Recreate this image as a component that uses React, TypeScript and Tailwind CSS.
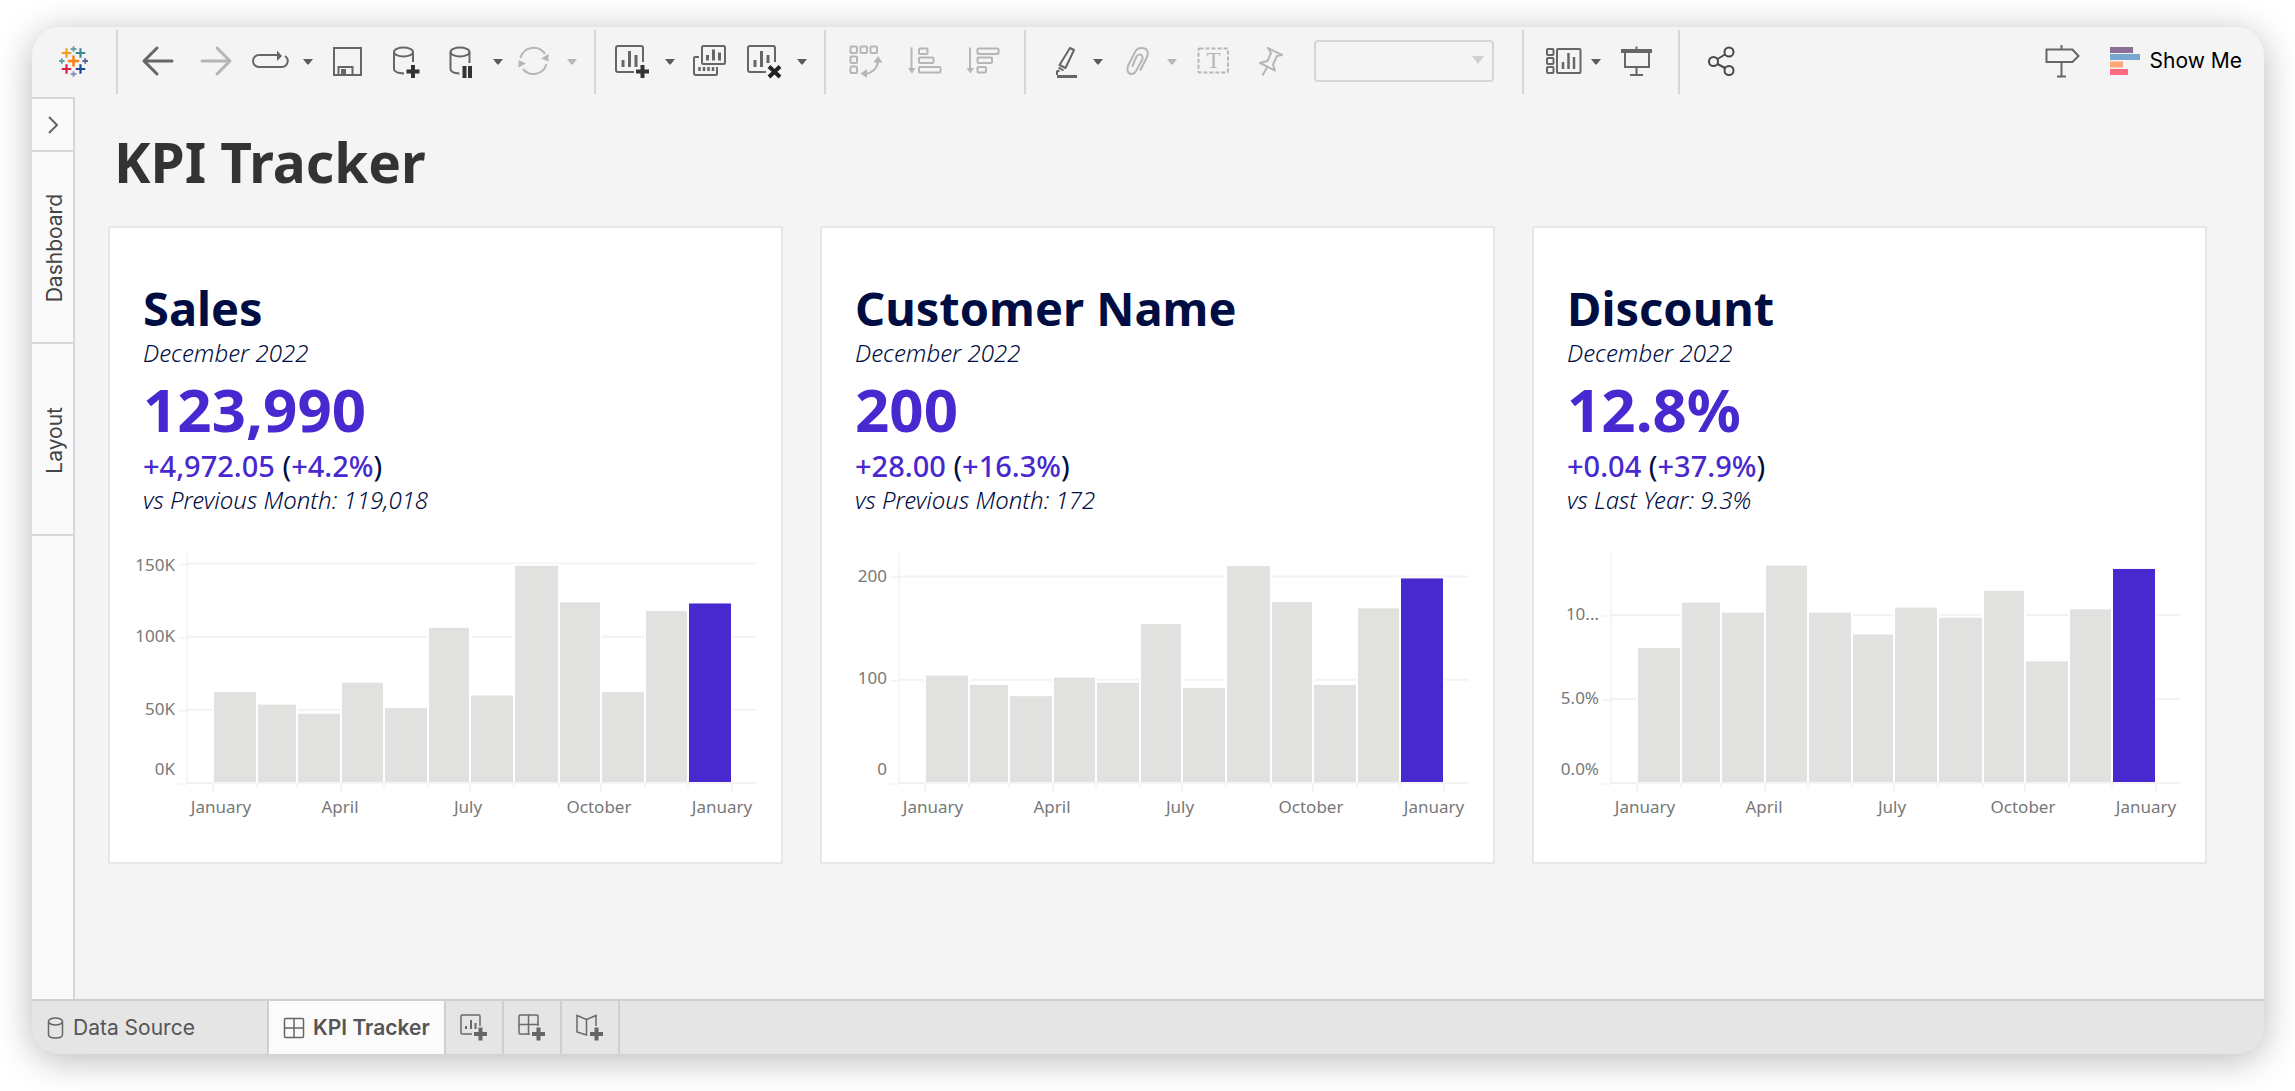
import type { ReactNode } from "react";
import clsx from "clsx";

type Metric = {
  name: string;
  period: string;
  value: string;
  change: string;
  changePct: string;
  compare: string;
  pxPerUnit: number;
  ticks: { at: number; label: string; labelY: number }[];
  months: number[];
};

const METRICS: Metric[] = [
  {
    name: "Sales",
    period: "December 2022",
    value: "123,990",
    change: "+4,972.05",
    changePct: "+4.2%",
    compare: "vs Previous Month: 119,018",
    pxPerUnit: 1.463,
    ticks: [
      { at: 150, label: "150K", labelY: 26 },
      { at: 100, label: "100K", labelY: 97 },
      { at: 50, label: "50K", labelY: 170 },
      { at: 0, label: "0K", labelY: 230 },
    ],
    months: [62.8, 54.3, 48, 69.2, 52, 106.8, 60.5, 149.2, 124.2, 62.8, 118.2, 123.4],
  },
  {
    name: "Customer Name",
    period: "December 2022",
    value: "200",
    change: "+28.00",
    changePct: "+16.3%",
    compare: "vs Previous Month: 172",
    pxPerUnit: 1.033,
    ticks: [
      { at: 200, label: "200", labelY: 37 },
      { at: 100, label: "100", labelY: 139 },
      { at: 0, label: "0", labelY: 230 },
    ],
    months: [105, 96, 85, 103, 98, 155, 93, 211, 176, 96, 170, 199],
  },
  {
    name: "Discount",
    period: "December 2022",
    value: "12.8%",
    change: "+0.04",
    changePct: "+37.9%",
    compare: "vs Last Year: 9.3%",
    pxPerUnit: 16.8,
    ticks: [
      { at: 10, label: "10...", labelY: 75 },
      { at: 5, label: "5.0%", labelY: 159 },
      { at: 0, label: "0.0%", labelY: 230 },
    ],
    months: [8.1, 10.8, 10.2, 13, 10.2, 8.9, 10.5, 9.9, 11.5, 7.3, 10.4, 12.8],
  },
];

// first day of each month, counted from January 1st
const MONTH_START = [0, 31, 59, 90, 120, 151, 181, 212, 243, 273, 304, 334, 365];
const MONTH_LABELS = [
  { x: 111, label: "January" },
  { x: 230, label: "April" },
  { x: 358, label: "July" },
  { x: 489, label: "October" },
  { x: 612, label: "January" },
];

const PLOT_LEFT = 77;
const PLOT_RIGHT = 646;
const BASELINE = 238;

const monthX = (i: number) => Math.round(103 + MONTH_START[i] * 1.422);

function BarChart({ metric }: { metric: Metric }) {
  return (
    <svg
      viewBox="0 0 671 285"
      className="mt-[29px] w-full font-['Noto_Sans',sans-serif] text-[17px]"
      role="img"
      aria-label={`${metric.name} by month`}
    >
      <path d={`M${PLOT_LEFT} 7V${BASELINE}`} stroke="#f3f3f3" strokeWidth="1.5" />
      {metric.ticks.map((tick) => {
        const y = BASELINE - tick.at * metric.pxPerUnit;
        return (
          <g key={tick.label}>
            <path d={`M${PLOT_LEFT} ${y}H${PLOT_RIGHT}`} stroke="#f2f2f2" strokeWidth="2" />
            <path d={`M68 ${y + 1}h9`} stroke="#f2f2f2" strokeWidth="1.5" />
            <text x="65" y={tick.labelY} textAnchor="end" fill="#787878">
              {tick.label}
            </text>
          </g>
        );
      })}
      {metric.months.map((value, i) => {
        const height = value * metric.pxPerUnit;
        return (
          <rect
            key={i}
            x={monthX(i)}
            y={BASELINE - height}
            width={monthX(i + 1) - monthX(i)}
            height={height}
            fill={i === 11 ? "#4829cf" : "#e1e1df"}
            stroke="#fff"
            strokeWidth="2"
          />
        );
      })}
      <path d={`M${PLOT_LEFT} ${BASELINE}H${PLOT_RIGHT}`} stroke="#f2f2f2" strokeWidth="1.5" />
      {MONTH_START.map((_, i) => (
        <path
          key={i}
          d={`M${monthX(i)} ${BASELINE + 1}v${i % 3 === 0 ? 9 : 3}`}
          stroke="#f0f0f0"
          strokeWidth="1.5"
        />
      ))}
      {MONTH_LABELS.map((m) => (
        <text key={m.x} x={m.x} y="268" textAnchor="middle" fill="#787878">
          {m.label}
        </text>
      ))}
    </svg>
  );
}

function KpiCard({ metric }: { metric: Metric }) {
  return (
    <article className="border-2 border-[#e7e7e7] bg-white pt-13 pb-8 font-['Noto_Sans',sans-serif] text-[#000d42]">
      <div className="px-[33px]">
        <h2 className="text-[47px] leading-14 font-bold">{metric.name}</h2>
        <p className="mt-px text-[24px] leading-8 font-light italic">{metric.period}</p>
        <p className="mt-2 text-[60px] leading-16 font-bold text-[#4829cf]">{metric.value}</p>
        <p className="mt-[7px] text-[29px] leading-9">
          <span className="font-medium text-[#4829cf]">{metric.change}</span> (
          <span className="font-medium text-[#4829cf]">{metric.changePct}</span>)
        </p>
        <p className="text-[24px] leading-8 font-light italic">{metric.compare}</p>
      </div>
      <BarChart metric={metric} />
    </article>
  );
}

function ToolButton({
  label,
  className,
  muted,
  children,
}: {
  label: string;
  className: string;
  muted?: boolean;
  children: ReactNode;
}) {
  return (
    <button
      type="button"
      aria-label={label}
      className={clsx("shrink-0", muted ? "text-[#b6b6b6]" : "text-[#666]", className)}
    >
      <svg
        viewBox="0 0 36 36"
        className="size-9 overflow-visible"
        fill="none"
        stroke="currentColor"
        strokeWidth="2"
      >
        {children}
      </svg>
    </button>
  );
}

function Caret({ label, className, muted }: { label: string; className: string; muted?: boolean }) {
  return (
    <button
      type="button"
      aria-label={label}
      className={clsx("shrink-0", muted ? "text-[#b6b6b6]" : "text-[#5c5c5c]", className)}
    >
      <svg viewBox="0 0 12 36" className="h-9 w-3" fill="currentColor">
        <path d="M1 15h10l-4 5q-1 1-2 0z" />
      </svg>
    </button>
  );
}

function Divider({ className }: { className: string }) {
  return <span className={clsx("h-16 w-0.5 shrink-0 bg-[#d6d6d6]", className)} />;
}

function Logo() {
  const marks = [
    { x: 17.5, y: 17, r: 5.5, w: 2.6, color: "#f5811f" },
    { x: 10.5, y: 9, r: 4.8, w: 2.2, color: "#f59b1e" },
    { x: 24.5, y: 9, r: 4.8, w: 2.2, color: "#3c8799" },
    { x: 10.5, y: 25, r: 4.8, w: 2.2, color: "#dc1f4b" },
    { x: 24.5, y: 25, r: 4.8, w: 2.2, color: "#1d4b8f" },
    { x: 17.5, y: 5, r: 2.8, w: 1.8, color: "#62a0ae" },
    { x: 5.8, y: 17, r: 2.8, w: 1.8, color: "#62a0ae" },
    { x: 29.2, y: 17, r: 2.8, w: 1.8, color: "#5a6599" },
    { x: 17.5, y: 30, r: 2.8, w: 1.8, color: "#8292c3" },
  ];
  return (
    <svg viewBox="0 0 36 36" className="ml-6 size-9 shrink-0" role="img" aria-label="Home">
      {marks.map((m) => (
        <path
          key={`${m.x}-${m.y}`}
          d={`M${m.x - m.r} ${m.y}h${m.r * 2}M${m.x} ${m.y - m.r}v${m.r * 2}`}
          stroke={m.color}
          strokeWidth={m.w}
        />
      ))}
    </svg>
  );
}

function Toolbar() {
  return (
    <header className="flex h-[70px] shrink-0 items-center pr-[22px]">
      <Logo />
      <Divider className="ml-6" />
      <ToolButton label="Undo" className="ml-5.5">
        <path d="M32 17H4M17 4 4 17l13 13" strokeWidth="3" strokeLinecap="round" strokeLinejoin="round" />
      </ToolButton>
      <ToolButton label="Redo" className="ml-5.5" muted>
        <path d="M4 17h28M19 4l13 13-13 13" strokeWidth="3" strokeLinecap="round" strokeLinejoin="round" />
      </ToolButton>
      <ToolButton label="Replay" className="ml-4.5">
        <path d="M26 11H7a6 6 0 0 0 0 12h23a6 6 0 0 0 3-11" />
        <path d="M25 6.5 30 12l-5 5z" fill="currentColor" stroke="none" />
      </ToolButton>
      <Caret label="Replay options" className="ml-3.5" />
      <ToolButton label="Save" className="ml-4">
        <path d="M4 4h27v27H4zM8.500 31v-8h14v8" />
        <path d="M11 25h5v5h-5z" fill="currentColor" stroke="none" />
      </ToolButton>
      <ToolButton label="New Data Source" className="ml-5.5">
        <ellipse cx="15.500" cy="8" rx="9.500" ry="4.500" />
        <path d="M6 8v17q0 4 10 4.500M25 8v10" />
        <path d="M25 21v13M18.500 27.500h13" stroke="#333" strokeWidth="4" />
      </ToolButton>
      <ToolButton label="Pause Auto Updates" className="ml-4.5">
        <ellipse cx="18" cy="8" rx="9.500" ry="4.500" />
        <path d="M8.500 8v17q0 4 9 4.500M27.500 8v11" />
        <path d="M22.500 22v12M28 22v12" stroke="#333" strokeWidth="4" />
      </ToolButton>
      <Caret label="Auto update options" className="ml-3.5" />
      <ToolButton label="Run Update" className="ml-3" muted>
        <path d="M4.500 14A13.500 13.500 0 0 1 29 10M30.500 20A13.500 13.500 0 0 1 7 25" />
        <path d="M25 14.500 32.500 10v7.500zM2.500 16v7.500L10 19.500z" fill="currentColor" stroke="none" />
      </ToolButton>
      <Caret label="Run update options" className="ml-3.5" muted />
      <Divider className="ml-4" />
      <ToolButton label="New Worksheet" className="ml-4.5">
        <path d="M20 28H4a2 2 0 0 1-2-2V4a2 2 0 0 1 2-2h23a2 2 0 0 1 2 2v14" />
        <path d="M9 16v7M15.500 7v16M22 11v12" strokeWidth="3" />
        <path d="M28.500 21v13M22 27.500h13" stroke="#333" strokeWidth="4" />
      </ToolButton>
      <Caret label="New worksheet options" className="ml-3.5" />
      <ToolButton label="Duplicate" className="ml-4">
        <rect x="10" y="2" width="23" height="18" rx="1.500" />
        <path d="M15.500 11v5.500M21.500 5.500v11M27.500 8.500v8" strokeWidth="3" />
        <path d="M7 13H3q-1 0-1 1v15q0 2 2 2h20q1 0 1-1v-7" />
        <path d="M7.500 23v4M12 23v4M16.500 23v4M21 23v4" strokeWidth="2.500" />
      </ToolButton>
      <ToolButton label="Clear Sheet" className="ml-4.5">
        <path d="M20 28H4a2 2 0 0 1-2-2V4a2 2 0 0 1 2-2h23a2 2 0 0 1 2 2v14" />
        <path d="M9 16v7M15.500 7v16M22 11v8" strokeWidth="3" />
        <path d="m23 22.500 11 10.500m0-10.500L23 33" stroke="#222" strokeWidth="4" />
      </ToolButton>
      <Caret label="Clear options" className="ml-3.5" />
      <Divider className="ml-4" />
      <ToolButton label="Swap Rows and Columns" className="ml-5.5" muted>
        <rect x="2.500" y="2.500" width="6.500" height="6.500" rx="1" />
        <rect x="12.500" y="2.500" width="6.500" height="6.500" rx="1" />
        <rect x="22.500" y="2.500" width="6.500" height="6.500" rx="1" />
        <rect x="2.500" y="12.500" width="6.500" height="6.500" rx="1" />
        <rect x="2.500" y="22.500" width="6.500" height="6.500" rx="1" />
        <path d="M17 30q12-2 13-13" />
        <path d="m30 12 4.500 6.500h-9zM12.500 29.500l6.500-4.500v9z" fill="currentColor" stroke="none" />
      </ToolButton>
      <ToolButton label="Sort Ascending" className="ml-5.5" muted>
        <path d="M5.500 3.500v22" />
        <path d="M2 24h7.500l-3.500 5.500z" fill="currentColor" stroke="none" />
        <rect x="13" y="4.500" width="8.500" height="5.500" rx="1" />
        <rect x="13" y="13.500" width="14.500" height="5.500" rx="1" />
        <rect x="13" y="23" width="21.500" height="5.500" rx="1" />
      </ToolButton>
      <ToolButton label="Sort Descending" className="ml-5.5" muted>
        <path d="M6 3.500v22" />
        <path d="M2.500 24H10l-3.500 5.500z" fill="currentColor" stroke="none" />
        <rect x="13.500" y="4.500" width="21" height="5.500" rx="1" />
        <rect x="13.500" y="13.500" width="14.500" height="5.500" rx="1" />
        <rect x="13.500" y="23" width="8.500" height="5.500" rx="1" />
      </ToolButton>
      <Divider className="ml-6" />
      <ToolButton label="Highlight" className="ml-5.5">
        <path d="m22 4 4 2-8.500 18-6-3z" strokeLinejoin="round" />
        <path d="m10.500 23.500 5 3M9 31v-3.500l2.500-1" />
        <path d="M9 32.500h20" strokeWidth="3" />
      </ToolButton>
      <Caret label="Highlight options" className="ml-2" />
      <ToolButton label="Group Members" className="ml-4" muted>
        <path
          d="m20.500 26 6-12C29.500 8 27 4.500 22.500 4 19 3.500 16.500 5 15 8L8 22c-1.500 4 0 8 3.500 8 2.500 0 3.500-1 4.500-3l6-11c1.500-3 0-5.500-2.500-5.500-1.500 0-2.500 1-3 2L12.500 22"
          strokeLinecap="round"
        />
      </ToolButton>
      <Caret label="Group options" className="ml-2.5" muted />
      <ToolButton label="Show Mark Labels" className="ml-4.5" muted>
        <rect x="2.500" y="4.500" width="29.500" height="24" rx="1" strokeDasharray="4 2" />
        <text
          x="17.500"
          y="24"
          textAnchor="middle"
          fill="currentColor"
          stroke="none"
          className="font-['Liberation_Serif',serif] text-[23px]"
        >
          T
        </text>
      </ToolButton>
      <ToolButton label="Fix Axes" className="ml-5.5" muted>
        <path d="m14 4 14 7-5 1-4 8.500 2 6-15-7.500 7.500-2 3.500-8zM13 23.500 8.500 31.500" strokeLinejoin="round" />
      </ToolButton>
      <div className="relative ml-6 shrink-0">
        <select
          aria-label="Fit"
          disabled
          className="mb-0.5 block h-[42px] w-[180px] appearance-none rounded-sm border-2 border-[#d6d6d6] bg-transparent"
        />
        <svg viewBox="0 0 12 8" className="absolute top-4 right-2.5 h-2 w-3" fill="#d0d0d0">
          <path d="M0 0h12L6 8z" />
        </svg>
      </div>
      <Divider className="ml-7" />
      <ToolButton label="Show/Hide Cards" className="ml-5.5">
        <rect x="1" y="5" width="6.500" height="6" rx="1" />
        <rect x="1" y="14" width="6.500" height="6" rx="1" />
        <rect x="1" y="23" width="6.500" height="6" rx="1" />
        <rect x="11" y="5" width="23.500" height="24" rx="1" />
        <path d="M17 18v7M22.500 9v16M28 13v12" strokeWidth="2.500" />
      </ToolButton>
      <Caret label="Card options" className="ml-2" />
      <ToolButton label="Presentation Mode" className="ml-4.5">
        <path d="M1 7h31" strokeWidth="4" />
        <path d="M16.500 2.500V6M5 9v14h24V9M16.500 23v8M10 31h13" />
      </ToolButton>
      <Divider className="ml-5.5" />
      <ToolButton label="Share" className="ml-6">
        <g stroke="#484848">
          <circle cx="9.500" cy="17.500" r="4.500" />
          <circle cx="25" cy="8" r="4.500" />
          <circle cx="25" cy="26.500" r="4.500" />
          <path d="m13.500 15 7.500-4.500M13.500 20l7.500 4" />
        </g>
      </ToolButton>
      <ToolButton label="Data Guide" className="ml-auto">
        <path d="M17.500 1v4M2.500 5.500h26l6 6.500-6 6h-26zM17.500 18v14.500M13 32.500h9" />
      </ToolButton>
      <button
        type="button"
        className="mb-0.5 ml-[30px] flex shrink-0 items-center gap-2.5 font-['Inter',sans-serif] text-[21px] leading-8 text-black"
      >
        <svg viewBox="0 0 30 28" className="h-7 w-[30px]">
          <path d="M0 0h23v6H0z" fill="#8b6f96" />
          <path d="M0 7h30v6H0z" fill="#7aa6d1" />
          <path d="M0 14.500h13v6H0z" fill="#ffa679" />
          <path d="M0 22h18v6H0z" fill="#ff6a83" />
        </svg>
        Show Me
      </button>
    </header>
  );
}

function SidePane() {
  return (
    <nav className="w-[43px] shrink-0 border-t-2 border-r-2 border-[#d6d6d6] bg-[#fafafa] font-['Inter',sans-serif] text-[21px] text-[#444]">
      <button
        type="button"
        aria-label="Expand pane"
        className="flex h-[53px] w-full items-center justify-center border-b-2 border-[#d6d6d6]"
      >
        <svg viewBox="0 0 10 18" className="h-[18px] w-2.5" fill="none" stroke="#666" strokeWidth="2">
          <path d="m1 1 8 8-8 8" />
        </svg>
      </button>
      {["Dashboard", "Layout"].map((label) => (
        <button
          key={label}
          type="button"
          className="flex h-48 w-full items-center justify-center border-b-2 border-[#d6d6d6] pt-0.5 pl-1"
        >
          <span className="rotate-180 [writing-mode:vertical-rl]">{label}</span>
        </button>
      ))}
    </nav>
  );
}

function NewTab({ label, children }: { label: string; children: ReactNode }) {
  return (
    <button type="button" aria-label={label} className="border-r-2 border-[#cfcfcf] px-3.5">
      <svg viewBox="0 0 28 28" className="size-7" fill="none" stroke="#6a6a6a" strokeWidth="1.500">
        {children}
        <path d="M20.500 13.500v13M14 20h13" stroke="#666" strokeWidth="4" />
      </svg>
    </button>
  );
}

function SheetTabs() {
  return (
    <footer className="flex h-[55px] shrink-0 border-t-2 border-[#cfcfcf] bg-[#e5e5e5] font-['Inter',sans-serif] text-[21px] text-[#555]">
      <button
        type="button"
        className="flex w-[237px] items-center gap-2 border-r-2 border-[#cfcfcf] pl-[15px]"
      >
        <svg viewBox="0 0 18 22" className="h-[22px] w-[18px]" fill="none" stroke="#666" strokeWidth="1.500">
          <ellipse cx="8.500" cy="4.500" rx="7" ry="3.500" />
          <path d="M1.500 4.500v13q0 3.500 7 3.500t7-3.500v-13" />
        </svg>
        Data Source
      </button>
      <button
        type="button"
        className="flex items-center gap-2 border-r-2 border-[#cfcfcf] bg-[#fbfbfb] px-3.5 font-semibold"
      >
        <svg viewBox="0 0 22 22" className="size-[22px]" fill="none" stroke="#666" strokeWidth="1.500">
          <rect x="1.500" y="1.500" width="19" height="19" rx="1" />
          <path d="M11 1.500v19M1.500 11h19" />
        </svg>
        KPI Tracker
      </button>
      <NewTab label="New Worksheet">
        <path d="M12 20H2q-1 0-1-1V2q0-1 1-1h17q1 0 1 1v10" />
        <path d="M6 12v3M11 6v9M15.500 9v6" strokeWidth="2" />
      </NewTab>
      <NewTab label="New Dashboard">
        <path d="M12 20H2q-1 0-1-1V2q0-1 1-1h17q1 0 1 1v10M10.500 1v19M1 10.500h19" />
      </NewTab>
      <NewTab label="New Story">
        <path d="M20 12V1.500l-9.500 4-9.500-4V18l9.500 3V5.500" />
      </NewTab>
    </footer>
  );
}

export default function App() {
  return (
    <div className="flex min-h-screen bg-white pt-[27px] pr-[31px] pb-[37px] pl-8">
      <div className="flex min-w-0 flex-1 flex-col overflow-hidden rounded-[28px] bg-[#f4f4f4] shadow-[0_6px_36px_rgba(0,0,0,0.28)]">
        <Toolbar />
        <div className="flex flex-1">
          <SidePane />
          <main className="min-w-0 flex-1 pt-[33px] pr-[57px] pl-[33px]">
            <h1 className="pl-1.5 font-['Noto_Sans',sans-serif] text-[55px] leading-16 font-bold text-[#333]">
              KPI Tracker
            </h1>
            <div className="mt-8 grid grid-cols-3 gap-[37px]">
              {METRICS.map((metric) => (
                <KpiCard key={metric.name} metric={metric} />
              ))}
            </div>
          </main>
        </div>
        <SheetTabs />
      </div>
    </div>
  );
}
